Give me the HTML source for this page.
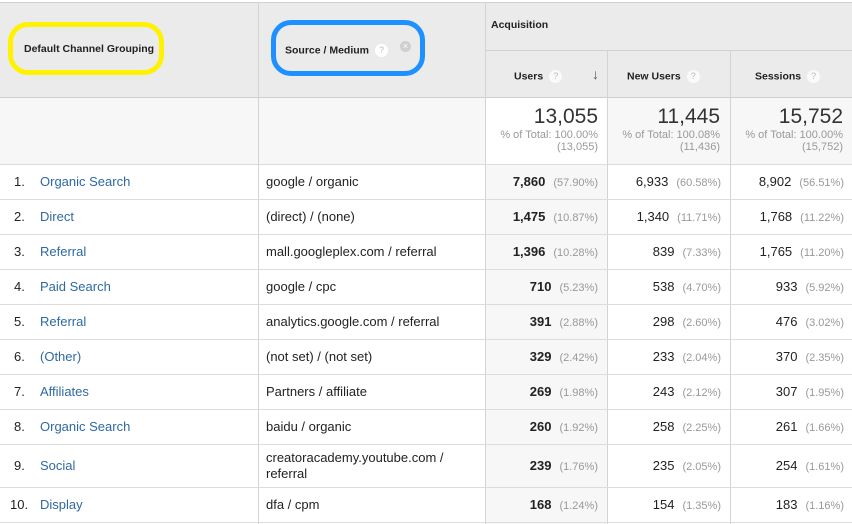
<!DOCTYPE html>
<html><head><meta charset="utf-8"><style>
*{margin:0;padding:0;box-sizing:border-box}
body{width:852px;height:524px;background:#fff;font-family:"Liberation Sans",Arial,sans-serif;font-size:13px;color:#222;position:relative;overflow:hidden}
.a{position:absolute}
.hl{position:absolute;height:1px;background:#dcdcdc;left:0;width:852px}
.vl{position:absolute;width:1px;background:#d4d4d4}
.q{display:inline-block;width:13px;height:13px;border-radius:7px;background:#fafafa;color:#bbb;font-size:9px;text-align:center;line-height:13px;vertical-align:middle;margin-left:6px;font-weight:normal}
.row{position:absolute;left:0;width:852px}
.n{position:absolute;left:14px}
.l{position:absolute;left:40px;color:#2f69a3}
.s{position:absolute;left:266px}
.c{position:absolute;text-align:right}
.p{color:#999;font-size:11px;margin-left:8px}
b{font-weight:bold}
.h{font-size:10.5px;font-weight:bold}
</style></head><body>
<div class="a" style="left:0;top:2px;width:852px;height:95px;background:#ebebeb"></div>
<div class="a" style="left:0;top:97px;width:852px;height:67px;background:#f7f7f7"></div>
<div class="a" style="left:485px;top:97px;width:122px;height:67px;background:#fff"></div>
<div class="a" style="left:485px;top:164px;width:122px;height:360px;background:#f7f7f7"></div>
<div class="hl" style="top:2px;background:#d0d0d0"></div>
<div class="hl" style="top:97px;background:#cfcfcf"></div>
<div class="hl" style="top:164px"></div>
<div class="a" style="left:485px;top:50px;width:367px;height:1px;background:#d0d0d0"></div>
<div class="vl" style="left:258px;top:2px;height:522px"></div>
<div class="vl" style="left:485px;top:2px;height:522px"></div>
<div class="vl" style="left:607px;top:50px;height:474px"></div>
<div class="vl" style="left:730px;top:50px;height:474px"></div>
<div class="a" style="left:8px;top:22px;width:156px;height:53px;border:5px solid #fff200;border-radius:20px"></div>
<div class="a h" style="left:24px;top:43px">Default Channel Grouping</div>
<div class="a" style="left:271px;top:20px;width:154px;height:56px;border:5px solid #1e90ff;border-radius:20px"></div>
<div class="a h" style="left:285px;top:44px">Source / Medium<span class="q" style="background:#fff">?</span></div>
<div class="a" style="left:400px;top:41px;width:11px;height:11px;border-radius:6px;background:#cfcfcf;color:#fff;font-size:9px;line-height:11px;text-align:center">×</div>
<div class="a h" style="left:491px;top:19px">Acquisition</div>
<div class="a h" style="left:514px;top:70px">Users<span class="q">?</span></div>
<div class="a" style="left:592px;top:66px;font-size:14px;color:#555">↓</div>
<div class="a h" style="left:627px;top:70px">New Users<span class="q">?</span></div>
<div class="a h" style="left:755px;top:70px">Sessions<span class="q">?</span></div>
<div class="a" style="left:485px;top:105px;width:113px;text-align:right;font-size:21px;color:#333">13,055</div>
<div class="a" style="left:485px;top:129px;width:113px;text-align:right;font-size:11px;color:#999;line-height:12px">% of Total: 100.00%<br>(13,055)</div>
<div class="a" style="left:607px;top:105px;width:113px;text-align:right;font-size:21px;color:#333">11,445</div>
<div class="a" style="left:607px;top:129px;width:113px;text-align:right;font-size:11px;color:#999;line-height:12px">% of Total: 100.08%<br>(11,436)</div>
<div class="a" style="left:730px;top:105px;width:113px;text-align:right;font-size:21px;color:#333">15,752</div>
<div class="a" style="left:730px;top:129px;width:113px;text-align:right;font-size:11px;color:#999;line-height:12px">% of Total: 100.00%<br>(15,752)</div>

<div class="row" style="top:174px"><span class="n">1.</span><span class="l">Organic Search</span><span class="s">google / organic</span><span class="c" style="right:254px"><b>7,860</b><span class="p">(57.90%)</span></span><span class="c" style="right:131px">6,933<span class="p">(60.58%)</span></span><span class="c" style="right:8px">8,902<span class="p">(56.51%)</span></span></div>
<div class="hl" style="top:199px"></div>
<div class="row" style="top:209px"><span class="n">2.</span><span class="l">Direct</span><span class="s">(direct) / (none)</span><span class="c" style="right:254px"><b>1,475</b><span class="p">(10.87%)</span></span><span class="c" style="right:131px">1,340<span class="p">(11.71%)</span></span><span class="c" style="right:8px">1,768<span class="p">(11.22%)</span></span></div>
<div class="hl" style="top:234px"></div>
<div class="row" style="top:244px"><span class="n">3.</span><span class="l">Referral</span><span class="s">mall.googleplex.com / referral</span><span class="c" style="right:254px"><b>1,396</b><span class="p">(10.28%)</span></span><span class="c" style="right:131px">839<span class="p">(7.33%)</span></span><span class="c" style="right:8px">1,765<span class="p">(11.20%)</span></span></div>
<div class="hl" style="top:269px"></div>
<div class="row" style="top:279px"><span class="n">4.</span><span class="l">Paid Search</span><span class="s">google / cpc</span><span class="c" style="right:254px"><b>710</b><span class="p">(5.23%)</span></span><span class="c" style="right:131px">538<span class="p">(4.70%)</span></span><span class="c" style="right:8px">933<span class="p">(5.92%)</span></span></div>
<div class="hl" style="top:304px"></div>
<div class="row" style="top:314px"><span class="n">5.</span><span class="l">Referral</span><span class="s">analytics.google.com / referral</span><span class="c" style="right:254px"><b>391</b><span class="p">(2.88%)</span></span><span class="c" style="right:131px">298<span class="p">(2.60%)</span></span><span class="c" style="right:8px">476<span class="p">(3.02%)</span></span></div>
<div class="hl" style="top:339px"></div>
<div class="row" style="top:349px"><span class="n">6.</span><span class="l">(Other)</span><span class="s">(not set) / (not set)</span><span class="c" style="right:254px"><b>329</b><span class="p">(2.42%)</span></span><span class="c" style="right:131px">233<span class="p">(2.04%)</span></span><span class="c" style="right:8px">370<span class="p">(2.35%)</span></span></div>
<div class="hl" style="top:374px"></div>
<div class="row" style="top:384px"><span class="n">7.</span><span class="l">Affiliates</span><span class="s">Partners / affiliate</span><span class="c" style="right:254px"><b>269</b><span class="p">(1.98%)</span></span><span class="c" style="right:131px">243<span class="p">(2.12%)</span></span><span class="c" style="right:8px">307<span class="p">(1.95%)</span></span></div>
<div class="hl" style="top:409px"></div>
<div class="row" style="top:419px"><span class="n">8.</span><span class="l">Organic Search</span><span class="s">baidu / organic</span><span class="c" style="right:254px"><b>260</b><span class="p">(1.92%)</span></span><span class="c" style="right:131px">258<span class="p">(2.25%)</span></span><span class="c" style="right:8px">261<span class="p">(1.66%)</span></span></div>
<div class="hl" style="top:444px"></div>
<div class="row" style="top:458px"><span class="n">9.</span><span class="l">Social</span><span class="s" style="top:-8px;line-height:16px">creatoracademy.youtube.com /<br>referral</span><span class="c" style="right:254px"><b>239</b><span class="p">(1.76%)</span></span><span class="c" style="right:131px">235<span class="p">(2.05%)</span></span><span class="c" style="right:8px">254<span class="p">(1.61%)</span></span></div>
<div class="hl" style="top:487px"></div>
<div class="row" style="top:497px"><span class="n" style="left:10px">10.</span><span class="l">Display</span><span class="s">dfa / cpm</span><span class="c" style="right:254px"><b>168</b><span class="p">(1.24%)</span></span><span class="c" style="right:131px">154<span class="p">(1.35%)</span></span><span class="c" style="right:8px">183<span class="p">(1.16%)</span></span></div>
<div class="hl" style="top:522px"></div>
</body></html>
